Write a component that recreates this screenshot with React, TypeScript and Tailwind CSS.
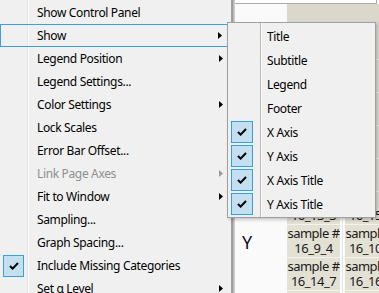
import React from 'react';

type Item = { label: string; arrow?: boolean; checked?: boolean; disabled?: boolean; active?: boolean };

const mainItems: Item[] = [
  { label: 'Show Control Panel' },
  { label: 'Show', arrow: true, active: true },
  { label: 'Legend Position', arrow: true },
  { label: 'Legend Settings...' },
  { label: 'Color Settings', arrow: true },
  { label: 'Lock Scales' },
  { label: 'Error Bar Offset...' },
  { label: 'Link Page Axes', arrow: true, disabled: true },
  { label: 'Fit to Window', arrow: true },
  { label: 'Sampling...' },
  { label: 'Graph Spacing...' },
  { label: 'Include Missing Categories', checked: true },
  { label: 'Set α Level', arrow: true },
];

const subItems: Item[] = [
  { label: 'Title' },
  { label: 'Subtitle' },
  { label: 'Legend' },
  { label: 'Footer' },
  { label: 'X Axis', checked: true },
  { label: 'Y Axis', checked: true },
  { label: 'X Axis Title', checked: true },
  { label: 'Y Axis Title', checked: true },
];

// rows of the sheet behind the menus: [label, col1, col2]; rows under the submenu stay blank
const sheetRows = [
  ['', '', ''],
  ['', '', ''],
  ['', '', ''],
  ['', '', ''],
  ['', '', ''],
  ['', '|16_13_3', '|16_15_2'],
  ['Y', 'sample #|16_9_4', 'sample #|16_10_5'],
  ['', 'sample #|16_14_7', 'sample #|16_16_2'],
  ['', '', ''],
];

function Arrow({ disabled }: { disabled?: boolean }) {
  return (
    <svg width="4" height="7" viewBox="0 0 4 7" className="shrink-0">
      <polygon points="0,0 4,3.5 0,7" fill={disabled ? '#9a9a9a' : '#000'} />
    </svg>
  );
}

function CheckBox({ className }: { className: string }) {
  return (
    <div className={`flex items-center justify-center bg-[#c4dff0] border border-[#3a9fdd] ${className}`}>
      <svg width="10" height="8" viewBox="0 0 10 8">
        <polyline points="1,4 3.6,6.6 9,1" fill="none" stroke="#000" strokeWidth="2" />
      </svg>
    </div>
  );
}

function MainMenu() {
  return (
    <div className="w-[232px] h-full shrink-0 border-r border-[#a0a0a0] bg-[linear-gradient(to_right,#f0f0f0_27px,#e3e3e3_27px,#e3e3e3_28px,#fdfdfd_28px,#fdfdfd_29px,#f0f0f0_29px)] pt-px">
      {mainItems.map((item) => (
        <div
          key={item.label}
          className={`h-[23px] flex items-center ${item.active ? 'border border-[#3a9fdd]' : ''}`}
        >
          <div className={`${item.active ? 'w-[27px]' : 'w-[28px]'} h-full flex items-center`}>
            {item.checked && <CheckBox className="ml-[3px] w-[21px] h-[22px]" />}
          </div>
          <span
            className={`flex-1 pl-[9px] pt-px whitespace-nowrap ${item.disabled ? 'text-[#8f8f8f]' : 'text-black'}`}
          >
            {item.label}
          </span>
          {item.arrow && (
            <div className="mr-[8px]">
              <Arrow disabled={item.disabled} />
            </div>
          )}
        </div>
      ))}
    </div>
  );
}

function SubMenu() {
  return (
    <div className="absolute left-[227px] top-[22px] w-[149px] h-[196px] border border-[#a0a0a0] bg-[linear-gradient(to_right,#f0f0f0_32px,#b9b9b9_32px,#b9b9b9_33px,#fdfdfd_33px,#fdfdfd_34px,#f0f0f0_34px)] shadow-[2px_2px_3px_rgba(0,0,0,0.2)] pt-px">
      {subItems.map((item) => (
        <div key={item.label} className="h-[24px] flex items-center">
          <div className="w-[32px] h-full flex items-center">
            {item.checked && <CheckBox className="ml-[3px] w-[22px] h-[22px]" />}
          </div>
          <span className="pl-[7px] pt-px text-black whitespace-nowrap">{item.label}</span>
        </div>
      ))}
    </div>
  );
}

function Cell({ text }: { text: string }) {
  const [a, b] = text.split('|');
  return (
    <div className="h-[33px] bg-[#e3e0d4] border-b border-[#f3f2ec] flex flex-col items-center justify-center text-[13px] leading-[15px] text-[#1a1a1a] whitespace-nowrap overflow-hidden tracking-[-0.5px]">
      {a !== undefined && <span>{a || '\u00a0'}</span>}
      {b !== undefined && <span>{b}</span>}
    </div>
  );
}

function Sheet() {
  return (
    <div className="flex-1 h-full bg-[#fafafa] flex flex-col overflow-hidden">
      <div className="h-[4px] w-[142px] shrink-0 bg-white border-b border-r border-[#ababab]" />
      <div className="grid grid-cols-[52px_53px_5px_53px] grid-rows-[23px] auto-rows-[33px]">
        <div />
        <div className="col-span-3 bg-[#dbd7ca]" />
        {sheetRows.map(([label, c1, c2], i) => (
          <React.Fragment key={i}>
            <div className="flex items-center pl-[7px] text-[18px] text-[#0d0d2a]">{label}</div>
            <Cell text={c1} />
            <div className="bg-[#fafafa] flex justify-center">
              <div className="w-px h-full bg-[#e6e6e6]" />
            </div>
            <Cell text={c2} />
          </React.Fragment>
        ))}
      </div>
    </div>
  );
}

export default function App() {
  return (
    <div className="relative w-[379px] h-[293px] overflow-hidden flex bg-[#fafafa] font-['Noto_Sans',sans-serif] text-[12px] leading-none tracking-[-0.35px]">
      <MainMenu />
      <div className="w-[3px] h-full shrink-0 bg-[linear-gradient(to_right,#8e8e8e,#b8b8b8,#dcdcdc)]" />
      <Sheet />
      <SubMenu />
    </div>
  );
}
